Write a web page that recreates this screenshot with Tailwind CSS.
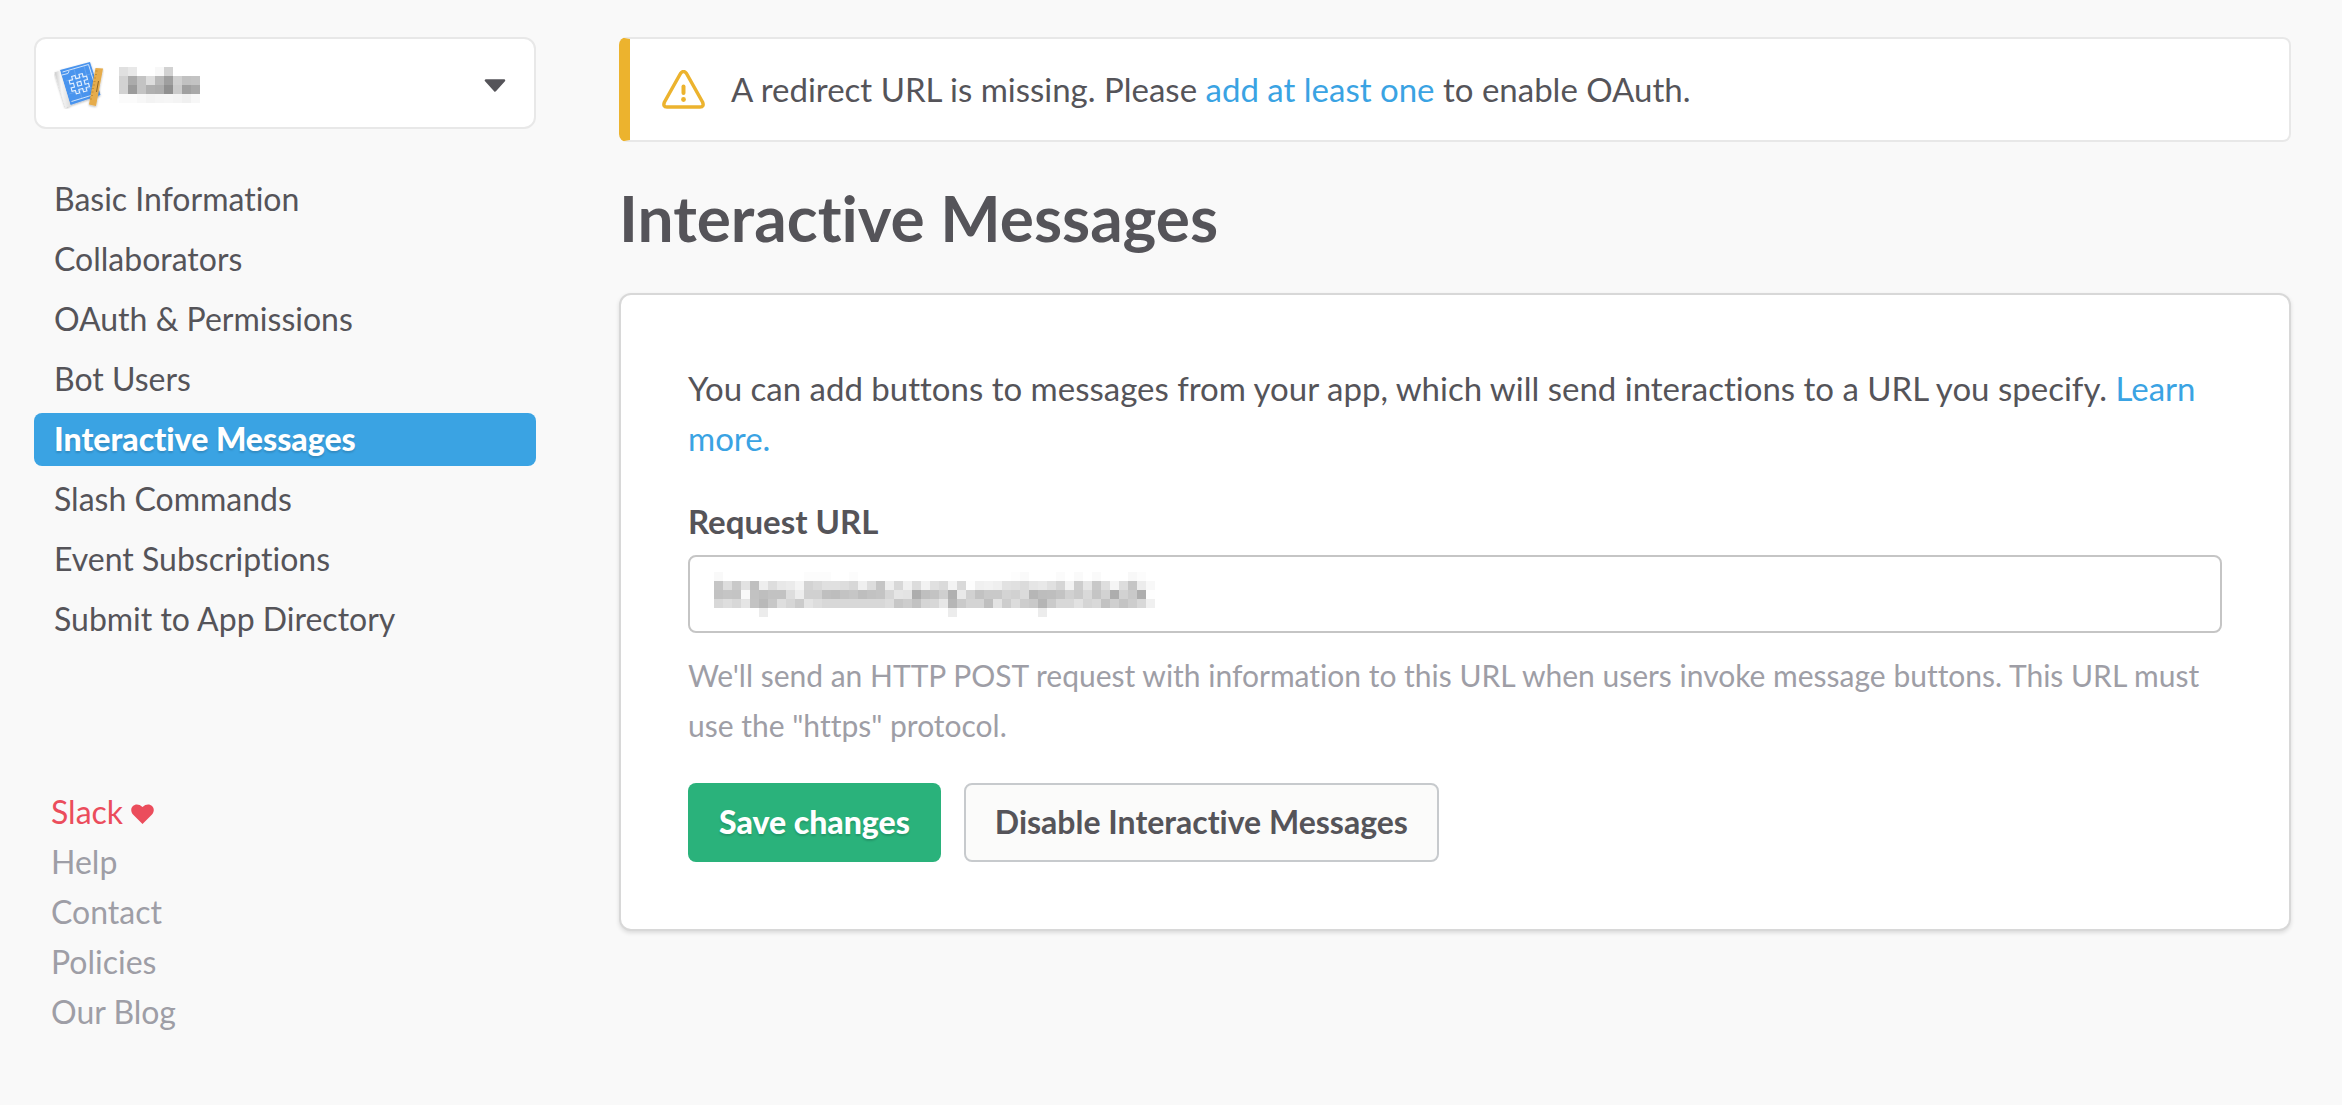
<!DOCTYPE html>
<html lang="en">
<head>
<meta charset="utf-8">
<meta name="viewport" content="width=device-width, initial-scale=1">
<title>Interactive Messages</title>
<script src="https://cdn.jsdelivr.net/npm/@tailwindcss/browser@4"></script>
</head>
<body class="min-h-screen bg-[#f9f9f9] font-[Lato,sans-serif] text-[#555459] [font-variant-ligatures:none]">
<div class="flex items-start gap-[83px] pt-[37px] pr-[51px] pb-10 pl-[34px]">

  <aside class="w-[502px] shrink-0">
    <button type="button" aria-label="Choose app" class="flex h-[92px] w-full items-center rounded-xl border-2 border-[#e8e8e8] bg-white pt-1 pr-7 pl-[18px]">
      <svg class="h-12 w-[50px]" viewBox="0 0 50 48" aria-hidden="true">
        <defs>
          <linearGradient id="roll" x1="0" y1="0.6" x2="1" y2="0.4">
            <stop offset="0" stop-color="#bdbdbd"/><stop offset="0.45" stop-color="#f6f6f6"/><stop offset="1" stop-color="#d6d6d6"/>
          </linearGradient>
          <filter id="soft" x="-20%" y="-20%" width="140%" height="140%"><feDropShadow dx="0" dy="1" stdDeviation="1" flood-opacity="0.3"/></filter>
        </defs>
        <g filter="url(#soft)">
          <path d="M6 9 36 1 46.500 34 16.500 44Z" fill="#4a94ee"/>
          <path d="M.5 11.500 6 9.500 16.500 44.500 11.500 46.500Z" fill="url(#roll)"/>
        </g>
        <g fill="none" stroke="#cfe3fb">
          <path d="M8.500 11 34.500 3.500 43.500 32.500 17.500 40.500M8 14 14 12.500 15 10" stroke-width="1"/>
          <path d="M12 20 40 12M15 33 42 25M20 8 28 38M30 5 38 34" stroke-width="0.500" opacity="0.400"/>
          <g transform="translate(25.300 22.700) rotate(-15)" stroke="#e6f1fe" stroke-width="1.100">
            <path d="M-5.500-9H-2V-5.500H2V-9H5.500V-5.500H9V-2H5.500V2H9V5.500H5.500V9H2V5.500H-2V9H-5.500V5.500H-9V2H-5.500V-2H-9V-5.500H-5.500Z"/>
            <path d="M-2-2H2V2H-2Z"/>
          </g>
        </g>
        <g filter="url(#soft)">
          <path d="M41.500 7 49 7.500 42 45 35 43.500Z" fill="#e6ac4b"/>
        </g>
        <path d="M41.500 10h2M41 13.500h2M40 17h2M39.500 20.500h2M39 24h2M38 27.500h2M37.500 31h2M37 34.500h2M36 38h2" stroke="#b9832c" stroke-width="0.700"/>
        <path d="M44.500 20 42.500 31" stroke="#8d6426" stroke-width="1"/>
      </svg>
      <svg class="ml-[15px] h-9 w-[81px]" viewBox="0 0 9 4" shape-rendering="crispEdges" aria-hidden="true" data-cells="e0e8fffff8d2ffffff d2abc3ddb99fd0c1c3 d29bc3b0ad90cba0a8 fbfbf7f3f5f6f4f0f7"></svg>
      <svg class="ml-auto h-[13px] w-[22px]" viewBox="0 0 22 13" aria-hidden="true"><path d="M2 1.500H20L11 11.500Z" fill="#555459" stroke="#555459" stroke-width="2.500" stroke-linejoin="round"/></svg>
    </button>

    <nav aria-label="App settings" class="mt-11 flex flex-col gap-[7px] text-[32px] leading-[51px]">
      <a href="#" class="px-5 pb-0.5">Basic Information</a>
      <a href="#" class="px-5 pb-0.5">Collaborators</a>
      <a href="#" class="px-5 pb-0.5">OAuth &amp; Permissions</a>
      <a href="#" class="px-5 pb-0.5">Bot Users</a>
      <a href="#" aria-current="page" class="rounded-lg bg-[#3aa3e3] px-5 pb-0.5 font-black text-white [text-shadow:0_2px_2px_rgb(0_0_0/0.15)]">Interactive Messages</a>
      <a href="#" class="px-5 pb-0.5">Slash Commands</a>
      <a href="#" class="px-5 pb-0.5">Event Subscriptions</a>
      <a href="#" class="px-5 pb-0.5">Submit to App Directory</a>
    </nav>

    <nav aria-label="Slack links" class="mt-[141px] flex flex-col px-[17px] text-[32px] leading-[50px] text-[#9e9ea6]">
      <a href="#" class="flex items-center gap-2 text-[#eb4d5c]">Slack
        <svg class="mt-1 h-5 w-[23px]" viewBox="0 0 23 20" aria-hidden="true"><path d="M11.500 20 2 10.500C-3.500 3.500 5-3.500 11.500 3 18-3.500 26.500 3.500 21 10.500Z" fill="#eb4d5c"/></svg>
      </a>
      <a href="#">Help</a>
      <a href="#">Contact</a>
      <a href="#">Policies</a>
      <a href="#">Our Blog</a>
    </nav>
  </aside>

  <main class="min-w-0 flex-1">
    <div role="alert" class="flex h-[105px] items-center gap-[26px] rounded-lg border-2 border-l-[11px] border-[#e8e8e8] border-l-[#ecb32e] bg-white px-8 text-[33px]">
      <svg class="h-[39px] w-[43px] shrink-0" viewBox="0 0 43 39" aria-hidden="true">
        <path d="M18.500 3.500Q21.500-.5 24.500 3.500L40.500 32Q42.500 37 38 37H5Q.5 37 2.500 32Z" fill="none" stroke="#ecb32e" stroke-width="3.500" stroke-linejoin="round"/>
        <path d="M21.500 16.500V23" stroke="#ecb32e" stroke-width="4" stroke-linecap="round"/><circle cx="21.500" cy="29.500" r="2.400" fill="#ecb32e"/>
      </svg>
      <p>A redirect URL is missing. Please <a href="#" class="text-[#3aa3e3]">add at least one</a> to enable OAuth.</p>
    </div>

    <h1 class="mt-9 mb-[35px] text-[64px] leading-[80px] font-bold">Interactive Messages</h1>

    <form class="rounded-xl border-2 border-[#d8d8d8] bg-white px-[67px] pt-[68px] pb-[67px] shadow-[0_2px_4px_rgb(0_0_0/0.12)]" onsubmit="return false">
      <p class="text-[33px] leading-[50px]">You can add buttons to messages from your app, which will send interactions to a URL you specify. <a href="#" class="text-[#3aa3e3]">Learn more.</a></p>
      <label for="request-url" class="mt-[33px] mb-[9px] block text-[33px] leading-[50px] font-bold">Request URL</label>
      <div class="relative">
        <input id="request-url" type="text" aria-describedby="request-url-hint" class="block h-[78px] w-full rounded-lg border-2 border-[#c5c5c5] bg-white px-6 text-[33px] outline-none">
        <svg class="pointer-events-none absolute top-[17px] left-[26px] h-[45px] w-[441px]" viewBox="0 0 49 5" shape-rendering="crispEdges" aria-hidden="true" data-cells="f9fffffffffffffffffffcfcfcfffffcfffffffffffffffffffffffffffffffffffdfafffffffbfffafffafffffff8fcff c5ddc9e2bfeedde8ebf4d3d9e0e0ddd7efddc5eed8f0dcf2e0daf3d9fdf0f2efe2e0dbe5e8e0d5f2cde5c8def5ddc5ecf8 c2c5c4f9c2bec2c2ddedd0d0bfbdc3c6bec2c4d6e5e3adbfc3cfb0e9d1c2c9c9d4d1dbb6bdbec3d1cad9c5d2add2c9aefe d8ded8e5c3b9c7ded6cbe4ddd8d8d8d8d8d8d8ddc7cdc2d5d8e7b6cad4d4bfe3cddccdc9b5cad8d8e2d5d9c2cfc4cdd8f0 ffffffffffecffffffffffffffffffffffffffffffffffffffffecffffffffffffffffffecffffffffffffffffffffffff"></svg>
      </div>
      <p id="request-url-hint" class="mt-[17px] text-[30px] leading-[50px] text-[#9e9ea6]">We'll send an HTTP POST request with information to this URL when users invoke message buttons. This URL must use the "https" protocol.</p>
      <div class="mt-[33px] flex gap-[23px] text-[32px]">
        <button type="submit" class="h-[79px] rounded-lg bg-[#2ab27b] px-[31px] pb-0.5 font-black text-white [text-shadow:0_2px_2px_rgb(0_0_0/0.15)]">Save changes</button>
        <button type="button" class="h-[79px] rounded-lg border-2 border-[#c7cacd] bg-[#fbfbfa] px-[29px] pb-0.5 font-bold">Disable Interactive Messages</button>
      </div>
    </form>
  </main>
</div>
<script>
  // Each row of data-cells holds two hex digits of grey per redaction cell.
  document.querySelectorAll('svg[data-cells]').forEach(svg => {
    svg.dataset.cells.split(' ').forEach((row, y) => {
      row.match(/../g).forEach((grey, x) => {
        if (grey === 'ff') return;
        const cell = document.createElementNS('http://www.w3.org/2000/svg', 'rect');
        Object.entries({ x, y, width: 1, height: 1, fill: '#' + grey.repeat(3) })
          .forEach(([name, value]) => cell.setAttribute(name, value));
        svg.append(cell);
      });
    });
  });
</script>
</body>
</html>
